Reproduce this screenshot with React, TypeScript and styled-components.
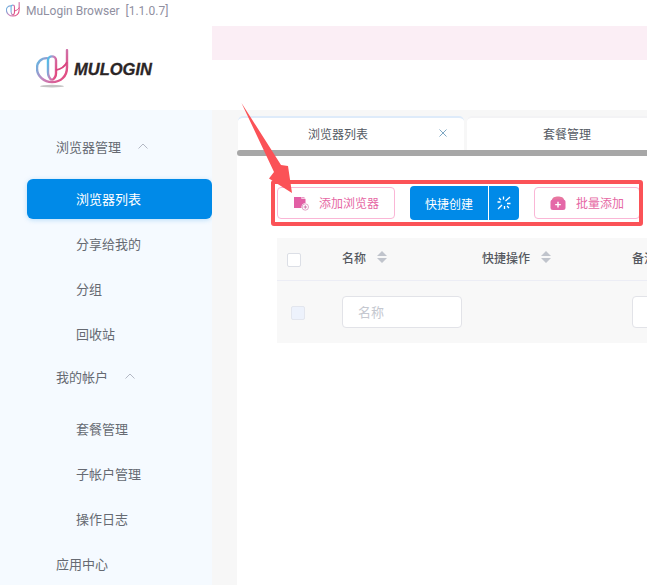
import React from "react";
import styled, { createGlobalStyle } from "styled-components";

const GlobalStyle = createGlobalStyle`
  html, body {
    margin: 0;
    padding: 0;
    background: #fff;
  }
  body {
    font-family: "Noto Sans CJK SC", "Liberation Sans", sans-serif;
  }
`

const Page = styled.div`
  position: relative;
  width: 647px;
  height: 585px;
  overflow: hidden;
  display: flex;
  flex-direction: column;
  background: #fff;
`

const TitleBar = styled.div`
  height: 22px;
  flex: none;
  display: flex;
  align-items: center;
  gap: 6px;
  padding-left: 6px;
  font-family: Roboto, "Noto Sans CJK SC", sans-serif;
  font-size: 12px;
  color: #8f8f9f;
  white-space: pre;
`

const Header = styled.div`
  height: 88px;
  flex: none;
  display: flex;
`

const LogoArea = styled.div`
  width: 212px;
  flex: none;
  display: flex;
  align-items: flex-start;
  gap: 5px;
  padding: 27px 0 0 36px;
  box-sizing: border-box;
`

const LogoText = styled.span`
  font-family: "Liberation Sans", Arial, sans-serif;
  font-weight: 700;
  font-style: italic;
  font-size: 16.5px;
  line-height: 18px;
  margin-top: 11px;
  -webkit-text-stroke: 0.3px #2b2526;
  color: #2b2526;
`

const Notice = styled.div`
  flex: 1;
  height: 34px;
  margin-top: 4px;
  background: #fbeef5;
`

const Body = styled.div`
  flex: 1;
  display: flex;
  min-height: 0;
`

const Sidebar = styled.div`
  width: 212px;
  flex: none;
  background: #f5faff;
  padding-top: 17px;
  box-sizing: border-box;
`

const GroupLabel = styled.div`
  height: 38px;
  display: flex;
  align-items: center;
  gap: 16px;
  padding-left: 56px;
  font-size: 13px;
  color: #666a72;
`

const MenuList = styled.div<{ $tail: number }>`
  padding: 11.5px 0 ${(p) => p.$tail}px 27px;
`

const MenuItem = styled.div<{ $active?: boolean }>`
  height: 45px;
  display: flex;
  align-items: center;
  font-size: 13px;

  span {
    flex: 1;
    height: 40px;
    line-height: 40px;
    padding-left: 49px;
    border-radius: 6px;
    color: ${(p) => (p.$active ? "#fff" : "#666a72")};
    background: ${(p) => (p.$active ? "#008ae8" : "transparent")};
    box-shadow: ${(p) => (p.$active ? "0 1px 5px rgba(0, 138, 232, 0.25)" : "none")};
  }
`

const Main = styled.div`
  flex: 1;
  min-width: 0;
  background: #f7f7f7;
  padding: 6px 0 0 25px;
  display: flex;
  flex-direction: column;
`

const Tabs = styled.div`
  display: flex;
  gap: 3px;
  height: 34px;
  flex: none;
  padding-left: 1px;
`

const Tab = styled.div<{ $active?: boolean }>`
  position: relative;
  flex: none;
  width: 226px;
  display: flex;
  align-items: center;
  justify-content: center;
  padding: 0 26px 1px 0;
  background: #fff;
  font-size: 12px;
  color: #555a63;
  border-radius: 5px 5px 0 0;
  box-sizing: border-box;
  border-top: 2px solid ${(p) => (p.$active ? "#deebfa" : "#f3f3f5")};
`

const TabClose = styled.span`
  position: absolute;
  right: 16px;
  top: 10px;
  display: flex;
`

const ScrollBar = styled.div`
  height: 6px;
  flex: none;
  background: #a7a7a7;
  border-radius: 3px 0 0 3px;
`

const Content = styled.div`
  flex: 1;
  background: #fff;
  padding: 30px 0 0 40px;
  overflow: hidden;
`

const Toolbar = styled.div`
  display: flex;
  align-items: center;
  height: 34px;
`

const OutlineButton = styled.div<{ $width: number; $gap: number; $left: number }>`
  width: ${(p) => p.$width}px;
  height: 32px;
  flex: none;
  box-sizing: border-box;
  display: flex;
  align-items: center;
  gap: ${(p) => p.$gap}px;
  padding-left: ${(p) => p.$left}px;
  border: 1px solid #fab6d6;
  border-radius: 4px;
  background: #fff;
  color: #e667a4;
  font-size: 12px;
  line-height: 28px;
`

const SplitGroup = styled.div`
  display: flex;
  gap: 1px;
  margin: 0 15px;
  height: 34px;
`

const SplitMain = styled.div`
  width: 78px;
  display: flex;
  align-items: center;
  justify-content: center;
  background: #008ae8;
  color: #fff;
  font-size: 12px;
  border-radius: 4px 0 0 4px;
`

const SplitIcon = styled.div`
  width: 30px;
  display: flex;
  align-items: center;
  justify-content: center;
  background: #008ae8;
  border-radius: 0 4px 4px 0;
`

const Table = styled.div`
  margin-top: 18px;
  width: 500px;
  background: #f8f8f8;
`

const TableRow = styled.div<{ $head?: boolean }>`
  display: grid;
  grid-template-columns: 65px 140px 150px 1fr;
  align-items: center;
  height: ${(p) => (p.$head ? 43 : 62)}px;
  box-sizing: border-box;
  border-bottom: ${(p) => (p.$head ? "1px solid #ecedf5" : "none")};
`

const HeadCell = styled.div`
  display: flex;
  align-items: center;
  gap: 11px;
  padding-bottom: 4px;
  font-size: 12px;
  font-weight: 500;
  color: #55585f;
  white-space: nowrap;
`

const Check = styled.div<{ $disabled?: boolean }>`
  width: 14px;
  height: 14px;
  box-sizing: border-box;
  border-radius: 2px;
  margin-left: ${(p) => (p.$disabled ? 14 : 10)}px;
  margin-top: ${(p) => (p.$disabled ? 2 : 1)}px;
  border: 1px solid ${(p) => (p.$disabled ? "#e3e6ee" : "#dcdfe6")};
  background: ${(p) => (p.$disabled ? "#edf2fc" : "#fff")};
`

const FilterInput = styled.div<{ $width: number }>`
  width: ${(p) => p.$width}px;
  height: 32px;
  box-sizing: border-box;
  border: 1px solid #e2e3e8;
  border-radius: 4px;
  background: #fff;
  display: flex;
  align-items: center;
  padding: 0 0 1px 15px;
  font-size: 13px;
  color: #c5c8d0;
`

const Annotation = styled.svg`
  position: absolute;
  left: 0;
  top: 0;
  pointer-events: none;
`

const CaretPair = () => (
  <svg width="10" height="12" viewBox="0 0 10 12">
    <path d="M5 0 L10 5 H0 Z M0 7 H10 L5 12 Z" fill="#c0c4cc" />
  </svg>
)

const Chevron = () => (
  <svg width="12" height="8" viewBox="0 0 12 8" fill="none">
    <path d="M1.5 6.5 L6 2 L10.5 6.5" stroke="#b3b8c4" strokeWidth="1" />
  </svg>
)

const LogoMark = ({ id, size, stroke, shadow }: { id: string; size: number; stroke: number; shadow?: boolean }) => (
  <svg width={size} height={size * 1.22} viewBox="0 0 33 40" fill="none">
    <defs>
      <linearGradient id={id} x1="0" y1="0.2" x2="1" y2="0.8">
        <stop offset="0" stopColor="#55bde8" />
        <stop offset="0.45" stopColor="#c585bd" />
        <stop offset="1" stopColor="#e4487e" />
      </linearGradient>
    </defs>
    <path
      d="M11 9 C5 9 1 13 1 19 C1 27 8 33 16 33 C25 33 31 27 31 18 L31 1"
      stroke={`url(#${id})`}
      strokeWidth={stroke}
      strokeLinecap="round"
    />
    <path
      d="M16 31 C13 29 12 26 12 23 V11 C12 6 20 6 20 11 V24 C20 27 19 29 16 31"
      stroke={`url(#${id})`}
      strokeWidth={stroke}
    />
    <path d="M20 21 C25 20 29 17 31 13" stroke="#d9447f" strokeWidth={stroke * 0.8} />
    {shadow && <ellipse cx="16" cy="37" rx="12" ry="1.3" fill="#c4c4c4" />}
  </svg>
)

const CloseIcon = () => (
  <svg width="10" height="10" viewBox="0 0 10 10" fill="none">
    <path d="M1.5 1.5 L8.5 8.5 M8.5 1.5 L1.5 8.5" stroke="#7fa8c4" strokeWidth="1" />
  </svg>
)

const AddFileIcon = () => (
  <svg width="16" height="15" viewBox="0 0 16 15">
    <path d="M1 1 H8.5 V3 H12.5 V7 A4 4 0 0 0 8.5 12 H1 Z" fill="#e25fa5" />
    <path d="M9 1 H11 L12.5 2.5 H9 Z" fill="#eb9cc6" />
    <circle cx="12.3" cy="11" r="3.2" fill="#fff" stroke="#d98cb6" strokeWidth="0.8" />
    <path d="M12.3 9.3 V12.7 M10.6 11 H14" stroke="#c9609c" strokeWidth="0.8" />
  </svg>
)

const BatchIcon = () => (
  <svg width="16" height="14" viewBox="0 0 16 14">
    <path d="M2 4 C2 -0.6 14 -0.6 14 4 Z" fill="#e8779f" />
    <rect x="0.5" y="3.5" width="15" height="10.5" rx="2.5" fill="#e468a8" />
    <path d="M8 5.8 V11.4 M5.2 8.6 H10.8" stroke="#fff" strokeWidth="1.4" />
  </svg>
)

const SparkIcon = () => (
  <svg width="14" height="14" viewBox="0 0 14 14" stroke="#fff" strokeWidth="1.3" fill="none">
    <path d="M6.5 0.5 V3.5 M8.5 5 L13 1 M1 13 L5 9 M0.5 6 H3.5 M10 7.5 H13.5 M7.5 10 V13 M2 2 L4 4 M10 10 L12 12" />
  </svg>
)

const menus = [
  { label: "浏览器管理", chevron: true, tail: 0.5, items: ["浏览器列表", "分享给我的", "分组", "回收站"] },
  { label: "我的帐户", chevron: true, tail: 2.5, items: ["套餐管理", "子帐户管理", "操作日志"] },
  { label: "应用中心", chevron: false, tail: 0, items: [] },
]

export default function App() {
  return (
    <Page>
      <GlobalStyle />
      <TitleBar>
        <LogoMark id="markSmall" size={14} stroke={2.6} />
        <span>MuLogin Browser  [1.1.0.7]</span>
      </TitleBar>
      <Header>
        <LogoArea>
          <LogoMark id="markLarge" size={33} stroke={2.4} shadow />
          <LogoText>MULOGIN</LogoText>
        </LogoArea>
        <Notice />
      </Header>
      <Body>
        <Sidebar>
          {menus.map((group) => (
            <div key={group.label}>
              <GroupLabel>
                {group.label}
                {group.chevron && <Chevron />}
              </GroupLabel>
              {group.items.length > 0 && (
                <MenuList $tail={group.tail}>
                  {group.items.map((item) => (
                    <MenuItem key={item} $active={item === "浏览器列表"}>
                      <span>{item}</span>
                    </MenuItem>
                  ))}
                </MenuList>
              )}
            </div>
          ))}
        </Sidebar>
        <Main>
          <Tabs>
            <Tab $active>
              浏览器列表
              <TabClose>
                <CloseIcon />
              </TabClose>
            </Tab>
            <Tab>套餐管理</Tab>
          </Tabs>
          <ScrollBar />
          <Content>
            <Toolbar>
              <OutlineButton $width={118} $gap={10} $left={15}>
                <AddFileIcon />
                添加浏览器
              </OutlineButton>
              <SplitGroup>
                <SplitMain>快捷创建</SplitMain>
                <SplitIcon>
                  <SparkIcon />
                </SplitIcon>
              </SplitGroup>
              <OutlineButton $width={106} $gap={10} $left={15}>
                <BatchIcon />
                批量添加
              </OutlineButton>
            </Toolbar>
            <Table>
              <TableRow $head>
                <div>
                  <Check />
                </div>
                <HeadCell>
                  名称 <CaretPair />
                </HeadCell>
                <HeadCell>
                  快捷操作 <CaretPair />
                </HeadCell>
                <HeadCell>备注</HeadCell>
              </TableRow>
              <TableRow>
                <div>
                  <Check $disabled />
                </div>
                <FilterInput $width={120}>名称</FilterInput>
                <div />
                <FilterInput $width={120} />
              </TableRow>
            </Table>
          </Content>
        </Main>
      </Body>
      <Annotation width="647" height="585" viewBox="0 0 647 585">
        <rect x="273" y="182" width="368" height="42" fill="none" stroke="#fb5257" strokeWidth="4" rx="1" />
        <path d="M241.5 103 L281 165 L288 166 L292 193 L269 178.5 L274 172 Z" fill="#fb5257" />
      </Annotation>
    </Page>
  )
}
